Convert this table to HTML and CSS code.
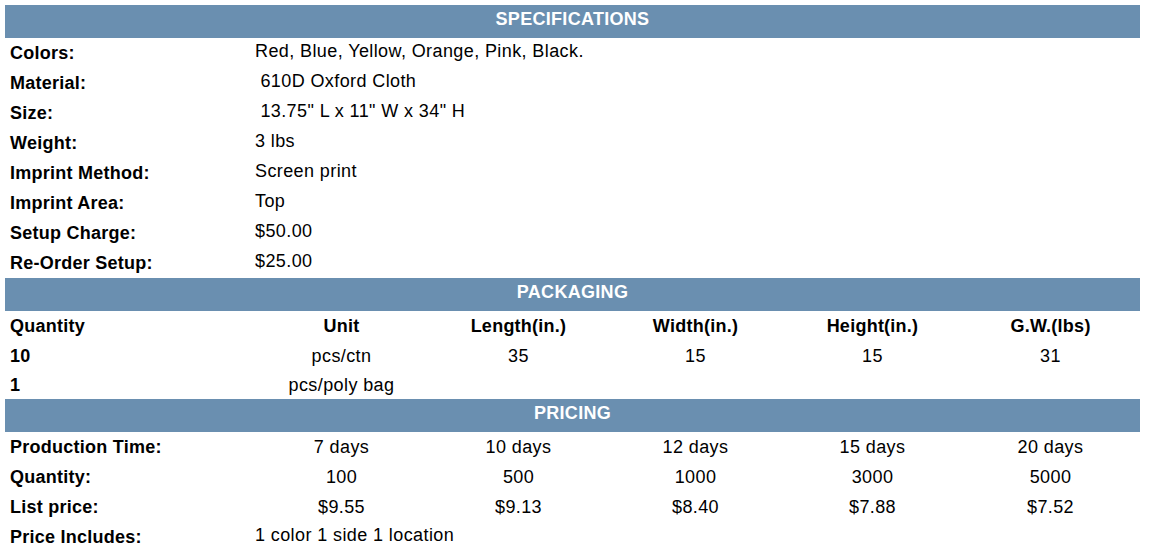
FILE: index.html
```html
<!DOCTYPE html>
<html lang="en">
<head>
<meta charset="utf-8">
<title>Specifications</title>
<link rel="stylesheet" href="styles.css">
</head>
<body>
<div class="sheet">
  <div class="bar">SPECIFICATIONS</div>
  <div class="spec">
    <div class="lbl">Colors:</div><div class="val">Red, Blue, Yellow, Orange, Pink, Black.</div>
    <div class="lbl">Material:</div><div class="val">&nbsp;610D Oxford Cloth</div>
    <div class="lbl">Size:</div><div class="val">&nbsp;13.75" L x 11" W x 34" H</div>
    <div class="lbl">Weight:</div><div class="val">3 lbs</div>
    <div class="lbl">Imprint Method:</div><div class="val">Screen print</div>
    <div class="lbl">Imprint Area:</div><div class="val">Top</div>
    <div class="lbl">Setup Charge:</div><div class="val">$50.00</div>
    <div class="lbl">Re-Order Setup:</div><div class="val">$25.00</div>
  </div>

  <div class="bar">PACKAGING</div>
  <div class="grid6 pack">
    <div class="lbl">Quantity</div>
    <div class="c b">Unit</div>
    <div class="c b">Length(in.)</div>
    <div class="c b">Width(in.)</div>
    <div class="c b">Height(in.)</div>
    <div class="c b">G.W.(lbs)</div>

    <div class="lbl">10</div>
    <div class="c">pcs/ctn</div>
    <div class="c">35</div>
    <div class="c">15</div>
    <div class="c">15</div>
    <div class="c">31</div>

    <div class="lbl">1</div>
    <div class="c">pcs/poly bag</div>
    <div class="c"></div>
    <div class="c"></div>
    <div class="c"></div>
    <div class="c"></div>
  </div>

  <div class="bar">PRICING</div>
  <div class="grid6 price">
    <div class="lbl">Production Time:</div>
    <div class="c">7 days</div>
    <div class="c">10 days</div>
    <div class="c">12 days</div>
    <div class="c">15 days</div>
    <div class="c">20 days</div>

    <div class="lbl">Quantity:</div>
    <div class="c">100</div>
    <div class="c">500</div>
    <div class="c">1000</div>
    <div class="c">3000</div>
    <div class="c">5000</div>

    <div class="lbl">List price:</div>
    <div class="c">$9.55</div>
    <div class="c">$9.13</div>
    <div class="c">$8.40</div>
    <div class="c">$7.88</div>
    <div class="c">$7.52</div>

    <div class="lbl">Price Includes:</div>
    <div class="val span">1 color 1 side 1 location</div>
  </div>
</div>
</body>
</html>
```

FILE: styles.css
```css
html, body {
  background: #ffffff;
}

body {
  margin: 5px;
  font-family: "Liberation Sans", Arial, sans-serif;
  font-size: 18px;
  letter-spacing: 0.2px;
  color: #000000;
}

.sheet {
  width: 1135px;
}

.bar {
  height: 33px;
  box-sizing: border-box;
  padding-bottom: 5px;
  background: #6a8fb0;
  color: #ffffff;
  font-weight: bold;
  letter-spacing: 0.3px;
  display: flex;
  align-items: center;
  justify-content: center;
}

.spec {
  display: grid;
  grid-template-columns: 248px 1fr;
  grid-auto-rows: 30px;
}

.grid6 {
  display: grid;
  grid-template-columns: 248px 177px 177px 177px 177px 179px;
}

.pack {
  grid-template-rows: 30px 30px 28px;
}

.price {
  grid-auto-rows: 30px;
}

.lbl {
  display: flex;
  align-items: center;
  padding-left: 5px;
  font-weight: bold;
  letter-spacing: 0.25px;
  white-space: nowrap;
}

.val {
  display: flex;
  align-items: center;
  padding-left: 2px;
  padding-bottom: 3px;
  box-sizing: border-box;
  letter-spacing: 0.4px;
  white-space: pre;
}

.span {
  grid-column: 2 / span 5;
}

.c {
  display: flex;
  align-items: center;
  justify-content: center;
  letter-spacing: 0.4px;
  white-space: nowrap;
}

.b {
  font-weight: bold;
  letter-spacing: 0.25px;
}
```
